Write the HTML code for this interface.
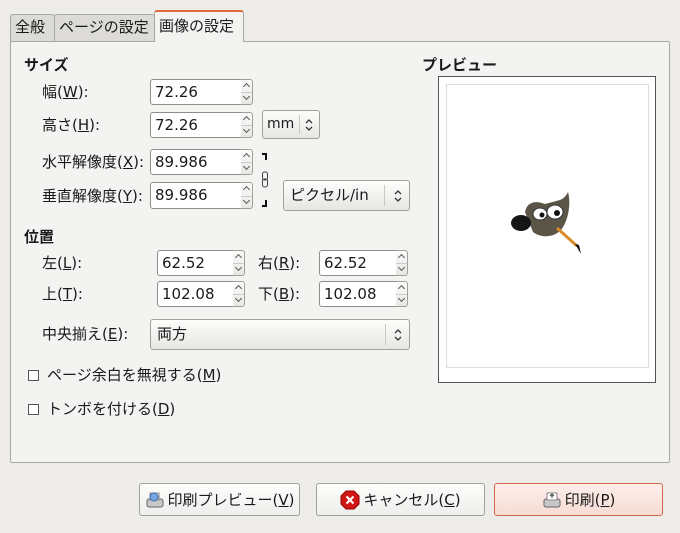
<!DOCTYPE html>
<html><head><meta charset="utf-8"><style>
*{box-sizing:border-box;margin:0;padding:0}
body{width:680px;height:533px;background:#edeceb;font-family:"DejaVu Sans","Noto Sans CJK JP",sans-serif;font-size:15px;color:#1a1a1a;position:relative;overflow:hidden}
.a{position:absolute;white-space:nowrap;line-height:18px}
.b{font-weight:bold}
.tab{position:absolute;border:1px solid #a8a8a4;border-bottom:none;background:#dcdbd8;border-radius:3px 3px 0 0;padding:2px 4px 0;height:28px;line-height:20px;white-space:nowrap}
.panel{position:absolute;left:10px;top:41px;width:660px;height:422px;border:1px solid #a8a8a4;background:#f3f3f1;border-radius:0 2px 2px 2px}
.e{position:absolute;background:#fff;border:1px solid #8e8e8a;border-radius:3px 0 0 3px;padding:3px 4px;line-height:18px;font-size:15px}
.sp{position:absolute;width:12px;border:1px solid #a0a09c;border-left:none;border-radius:0 3px 3px 0;background:linear-gradient(#fbfbfa,#e7e7e4)}
.sp:before{content:"";position:absolute;left:3px;top:4px;width:4px;height:4px;border-left:1px solid #555;border-top:1px solid #555;transform:rotate(45deg)}
.sp:after{content:"";position:absolute;left:3px;bottom:5px;width:4px;height:4px;border-right:1px solid #555;border-bottom:1px solid #555;transform:rotate(45deg)}
.sp i{position:absolute;left:0;right:0;top:50%;border-top:1px solid #ccc}
.cb{position:absolute;border:1px solid #a0a09c;border-radius:3px;background:linear-gradient(#fdfdfc,#e6e6e3);padding:0 6px;font-size:15px;white-space:nowrap}
.arr{position:absolute;right:6px;top:50%;margin-top:-7px;width:10px;height:14px}
.sep{position:absolute;top:4px;bottom:4px;border-left:1px solid #c8c8c4}
.btn{position:absolute;top:483px;height:33px;border:1px solid #a0a09c;border-radius:3px;background:linear-gradient(#fdfdfc,#eeeeec);display:flex;align-items:center;justify-content:center;gap:3px;font-size:15px;white-space:nowrap}
.chk{position:absolute;width:11px;height:11px;border:1px solid #555;background:#fff}
u{text-decoration:underline}
</style></head><body>
<div class="tab" style="left:10px;top:14px;width:45px">全般</div>
<div class="tab" style="left:54px;top:14px;width:101px">ページの設定</div>
<div class="panel"></div>
<div class="tab" style="left:154px;top:10px;width:90px;height:32px;background:#f3f3f1;border-top:2px solid #e36a3a;padding-top:4px;z-index:2">画像の設定</div>

<div class="a b" style="left:24px;top:56px;font-size:15px">サイズ</div>
<div class="a" style="left:42px;top:83px">幅(<u>W</u>):</div>
<div class="e" style="left:150px;top:79px;width:92px;height:26px">72.26</div><div class="sp" style="left:241px;top:79px;height:26px"><i></i></div>
<div class="a" style="left:42px;top:116px">高さ(<u>H</u>):</div>
<div class="e" style="left:150px;top:112px;width:92px;height:26px">72.26</div><div class="sp" style="left:241px;top:112px;height:26px"><i></i></div>
<div class="cb" style="left:262px;top:110px;width:58px;height:29px;line-height:27px;padding:0 4px;font-size:14px">mm<span class="sep" style="left:36px"></span><svg class="arr" viewBox="0 0 10 14" style="right:5px"><path d="M2 5l3-3 3 3M2 9l3 3 3-3" fill="none" stroke="#333" stroke-width="1.3"/></svg></div>
<div class="a" style="left:42px;top:153px">水平解像度(<u>X</u>):</div>
<div class="e" style="left:150px;top:149px;width:92px;height:26px">89.986</div><div class="sp" style="left:241px;top:149px;height:26px"><i></i></div>
<div class="a" style="left:42px;top:187px">垂直解像度(<u>Y</u>):</div>
<div class="e" style="left:150px;top:182px;width:92px;height:27px">89.986</div><div class="sp" style="left:241px;top:182px;height:27px"><i></i></div>
<svg class="a" style="left:258px;top:152px" width="14" height="56" viewBox="0 0 14 56"><path d="M4 2h4v6M4 54h4v-6" fill="none" stroke="#111" stroke-width="2"/><rect x="4.5" y="20" width="5" height="8" rx="2" fill="none" stroke="#444"/><rect x="4.5" y="27" width="5" height="8" rx="2" fill="none" stroke="#444"/></svg>
<div class="cb" style="left:283px;top:180px;width:127px;height:31px;line-height:29px">ピクセル/in<span class="sep" style="left:100px"></span><svg class="arr" viewBox="0 0 10 14"><path d="M2 5l3-3 3 3M2 9l3 3 3-3" fill="none" stroke="#333" stroke-width="1.3"/></svg></div>

<div class="a b" style="left:24px;top:228px;font-size:15px">位置</div>
<div class="a" style="left:42px;top:254px">左(<u>L</u>):</div>
<div class="e" style="left:157px;top:250px;width:77px;height:26px">62.52</div><div class="sp" style="left:233px;top:250px;height:26px"><i></i></div>
<div class="a" style="left:258px;top:254px">右(<u>R</u>):</div>
<div class="e" style="left:319px;top:250px;width:78px;height:26px">62.52</div><div class="sp" style="left:396px;top:250px;height:26px"><i></i></div>
<div class="a" style="left:42px;top:285px">上(<u>T</u>):</div>
<div class="e" style="left:157px;top:281px;width:77px;height:26px">102.08</div><div class="sp" style="left:233px;top:281px;height:26px"><i></i></div>
<div class="a" style="left:258px;top:285px">下(<u>B</u>):</div>
<div class="e" style="left:319px;top:281px;width:78px;height:26px">102.08</div><div class="sp" style="left:396px;top:281px;height:26px"><i></i></div>
<div class="a" style="left:42px;top:325px">中央揃え(<u>E</u>):</div>
<div class="cb" style="left:150px;top:319px;width:260px;height:31px;line-height:29px">両方<span class="sep" style="left:234px"></span><svg class="arr" viewBox="0 0 10 14"><path d="M2 5l3-3 3 3M2 9l3 3 3-3" fill="none" stroke="#333" stroke-width="1.3"/></svg></div>

<div class="chk" style="left:28px;top:370px"></div><div class="a" style="left:47px;top:366px">ページ余白を無視する(<u>M</u>)</div>
<div class="chk" style="left:28px;top:404px"></div><div class="a" style="left:47px;top:400px">トンボを付ける(<u>D</u>)</div>

<div class="a b" style="left:422px;top:56px;font-size:15px">プレビュー</div>
<div class="a" style="left:438px;top:76px;width:218px;height:307px;border:1px solid #555;background:#fff"></div>
<div class="a" style="left:446px;top:84px;width:203px;height:284px;border:1px solid #ddd;background:#fff"></div>
<svg class="a" style="left:505px;top:192px" width="85" height="65" viewBox="0 0 85 65">
<path d="M20 20C22 10 30 8 40 12L55 8C60 6 62 2 63 0C66 10 64 28 56 38C48 46 36 46 28 40Z" fill="#5a5546"/>
<ellipse cx="35" cy="22" rx="7" ry="6" fill="#fff" stroke="#333"/><circle cx="37" cy="23" r="2.5" fill="#111"/>
<ellipse cx="50" cy="20" rx="8" ry="7" fill="#fff" stroke="#333"/><circle cx="52" cy="21" r="3" fill="#111"/>
<ellipse cx="16" cy="31" rx="10" ry="8" fill="#151515"/>
<path d="M52 36L72 54" stroke="#d98a2a" stroke-width="3"/><path d="M70 52l6 10 -2-9z" fill="#111"/>
</svg>

<div class="btn" style="left:139px;width:161px"><svg width="20" height="20" viewBox="0 0 20 20"><rect x="2" y="9" width="16" height="8" rx="2" fill="#c8c8c8" stroke="#666"/><rect x="5" y="3" width="9" height="7" fill="#fff" stroke="#888"/><circle cx="9" cy="7" r="4" fill="#7aa6e0" stroke="#3a6ab0"/></svg><span>印刷プレビュー(<u>V</u>)</span></div>
<div class="btn" style="left:316px;width:169px"><svg width="20" height="20" viewBox="0 0 20 20"><path d="M6 1h8l5 5v8l-5 5H6l-5-5V6z" fill="#d01818" stroke="#900"/><path d="M6.5 6.5l7 7M13.5 6.5l-7 7" stroke="#fff" stroke-width="2.2"/></svg><span>キャンセル(<u>C</u>)</span></div>
<div class="btn" style="left:494px;width:169px;border-color:#d4684a;background:linear-gradient(#fdeeea,#f6dcd4)"><svg width="20" height="20" viewBox="0 0 20 20"><rect x="2" y="9" width="16" height="8" rx="2" fill="#c8c8c8" stroke="#666"/><rect x="5" y="3" width="10" height="7" fill="#fff" stroke="#888"/><path d="M10 4v4M8 6l2-2 2 2" stroke="#444" fill="none"/></svg><span>印刷(<u>P</u>)</span></div>
</body></html>
